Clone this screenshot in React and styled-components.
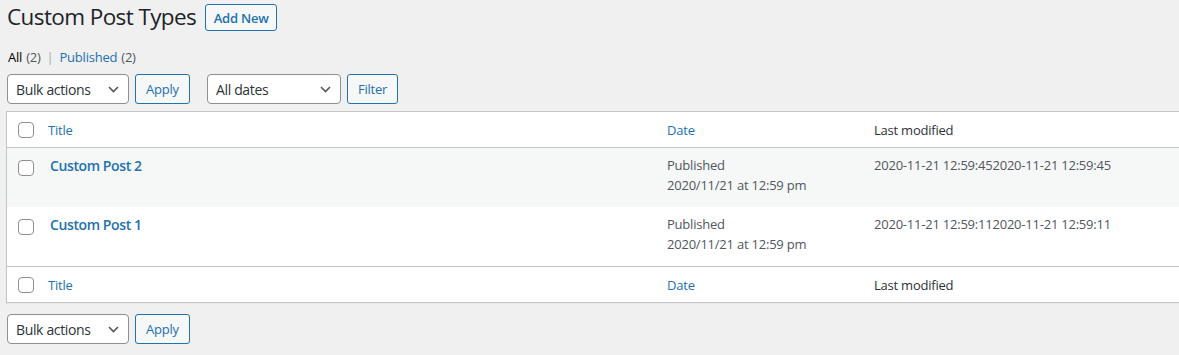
import React from "react";
import styled, { createGlobalStyle } from "styled-components";

const Global = createGlobalStyle`
  html, body { margin: 0; padding: 0; background: #f0f0f1; overflow: hidden; }
  body {
    font-family: "Open Sans", "Noto Sans", sans-serif;
    font-size: 13px;
    letter-spacing: -0.22px;
    color: #3c434a;
  }
  * { box-sizing: border-box; }
`;

const Page = styled.div`
  padding: 2px 0 0 6px;
  width: 1220px;
`;

const TitleRow = styled.div`
  display: flex;
  align-items: flex-start;
  gap: 9px;
  padding-left: 1px;
`;

const H1 = styled.h1`
  margin: 0;
  font-size: 22.5px;
  font-weight: 400;
  letter-spacing: -0.6px;
  line-height: 30px;
  color: #1d2327;
`;

const OutlineButton = styled.button`
  font-family: inherit;
  font-size: 13px;
  letter-spacing: -0.22px;
  font-weight: ${(p) => (p.$strong ? 600 : 400)};
  color: #2271b1;
  background: #f6f7f7;
  border: 1px solid #2271b1;
  border-radius: 3px;
  height: ${(p) => p.$h || 30}px;
  width: ${(p) => p.$w}px;
  padding: 0;
  margin-top: ${(p) => p.$mt || 0}px;
  cursor: pointer;
`;

const Views = styled.ul`
  list-style: none;
  margin: 12px 0 0 2px;
  padding: 0;
  display: flex;
  line-height: 26px;
  font-size: 13px;
  color: #50575e;
`;

const ViewItem = styled.li`
  display: flex;
  gap: 4px;
  color: ${(p) => (p.$current ? "#000" : "#2271b1")};
  font-weight: ${(p) => (p.$current ? 500 : 400)};
`;

const Count = styled.span`
  color: #50575e;
  font-weight: 400;
`;

const Sep = styled.span`
  color: #a7aaad;
  margin: 0 6px;
`;

const TableNav = styled.div`
  display: flex;
  align-items: center;
  margin: ${(p) => p.$m};
  padding-left: 1px;
`;

const Group = styled.div`
  display: flex;
  gap: 6px;
  margin-right: ${(p) => p.$mr || 0}px;
`;

const Select = styled.div`
  display: flex;
  align-items: center;
  justify-content: space-between;
  width: ${(p) => p.$w}px;
  height: 30px;
  padding: 0 9px 0 8px;
  background: #fff;
  border: 1px solid #8c8f94;
  border-radius: 4px;
  color: #2c3338;
  font-size: 14px;
  letter-spacing: -0.35px;
`;

const Chevron = () => (
  <svg width="11" height="7" viewBox="0 0 11 7" fill="none">
    <path d="M1 1l4.5 4.5L10 1" stroke="#50575e" strokeWidth="1.6" />
  </svg>
);

const Table = styled.div`
  margin-top: 7px;
  background: #fff;
  border: 1px solid #c3c4c7;
  box-shadow: 0 1px 1px rgba(0, 0, 0, 0.04);
`;

const Row = styled.div`
  display: grid;
  grid-template-columns: 31px 619px 207px 1fr;
  background: ${(p) => (p.$alt ? "#f6f7f7" : "#fff")};
  min-height: ${(p) => p.$h}px;
  align-items: ${(p) => (p.$head ? "center" : "start")};
  border-top: ${(p) => (p.$topBorder ? "1px solid #c3c4c7" : "none")};
  border-bottom: ${(p) => (p.$bottomBorder ? "1px solid #c3c4c7" : "none")};
`;

const CheckCell = styled.div`
  display: flex;
  padding-left: 11px;
  padding-top: ${(p) => p.$pt || 0}px;
`;

const Checkbox = styled.span`
  display: block;
  width: 16px;
  height: 16px;
  border: 1px solid #8c8f94;
  border-radius: 4px;
  background: #fff;
`;

const HeadCell = styled.div`
  padding-left: 10px;
  font-size: 13px;
  line-height: 20px;
  color: ${(p) => (p.$link ? "#2271b1" : "#2c3338")};
`;

const TitleCell = styled.div`
  padding: 8px 0 0 12px;
  font-size: 14px;
  font-weight: 600;
  letter-spacing: -0.4px;
  line-height: 20px;
  color: #2271b1;
`;

const TextCell = styled.div`
  padding: 8px 0 0 10px;
  font-size: 13px;
  line-height: 19.5px;
  color: #50575e;
`;

const posts = [
  { title: "Custom Post 2", mod: "2020-11-21 12:59:452020-11-21 12:59:45" },
  { title: "Custom Post 1", mod: "2020-11-21 12:59:112020-11-21 12:59:11" },
];

const HeaderRow = ({ footer }) => (
  <Row $head $h={footer ? 36 : 36} $topBorder={footer} $bottomBorder={!footer}>
    <CheckCell>
      <Checkbox />
    </CheckCell>
    <HeadCell $link>Title</HeadCell>
    <HeadCell $link>Date</HeadCell>
    <HeadCell>Last modified</HeadCell>
  </Row>
);

const Bulk = ({ mr }) => (
  <Group $mr={mr}>
    <Select $w={122}>
      <span>Bulk actions</span>
      <Chevron />
    </Select>
    <OutlineButton $w={55}>Apply</OutlineButton>
  </Group>
);

export default function App() {
  return (
    <Page>
      <Global />
      <TitleRow>
        <H1>Custom Post Types</H1>
        <OutlineButton $strong $w={72} $h={27} $mt={2}>
          Add New
        </OutlineButton>
      </TitleRow>
      <Views>
        <ViewItem $current>
          All <Count>(2)</Count>
        </ViewItem>
        <Sep>|</Sep>
        <ViewItem>
          Published <Count>(2)</Count>
        </ViewItem>
      </Views>
      <TableNav $m="4px 0 0 0">
        <Bulk mr={17} />
        <Group>
          <Select $w={134}>
            <span>All dates</span>
            <Chevron />
          </Select>
          <OutlineButton $w={51}>Filter</OutlineButton>
        </Group>
      </TableNav>
      <Table>
        <HeaderRow />
        {posts.map((p, i) => (
          <Row key={p.title} $alt={i === 0} $h={59}>
            <CheckCell $pt={12}>
              <Checkbox />
            </CheckCell>
            <TitleCell>{p.title}</TitleCell>
            <TextCell>
              Published
              <br />
              2020/11/21 at 12:59 pm
            </TextCell>
            <TextCell>{p.mod}</TextCell>
          </Row>
        ))}
        <HeaderRow footer />
      </Table>
      <TableNav $m="11px 0 0 0">
        <Bulk />
      </TableNav>
    </Page>
  );
}
